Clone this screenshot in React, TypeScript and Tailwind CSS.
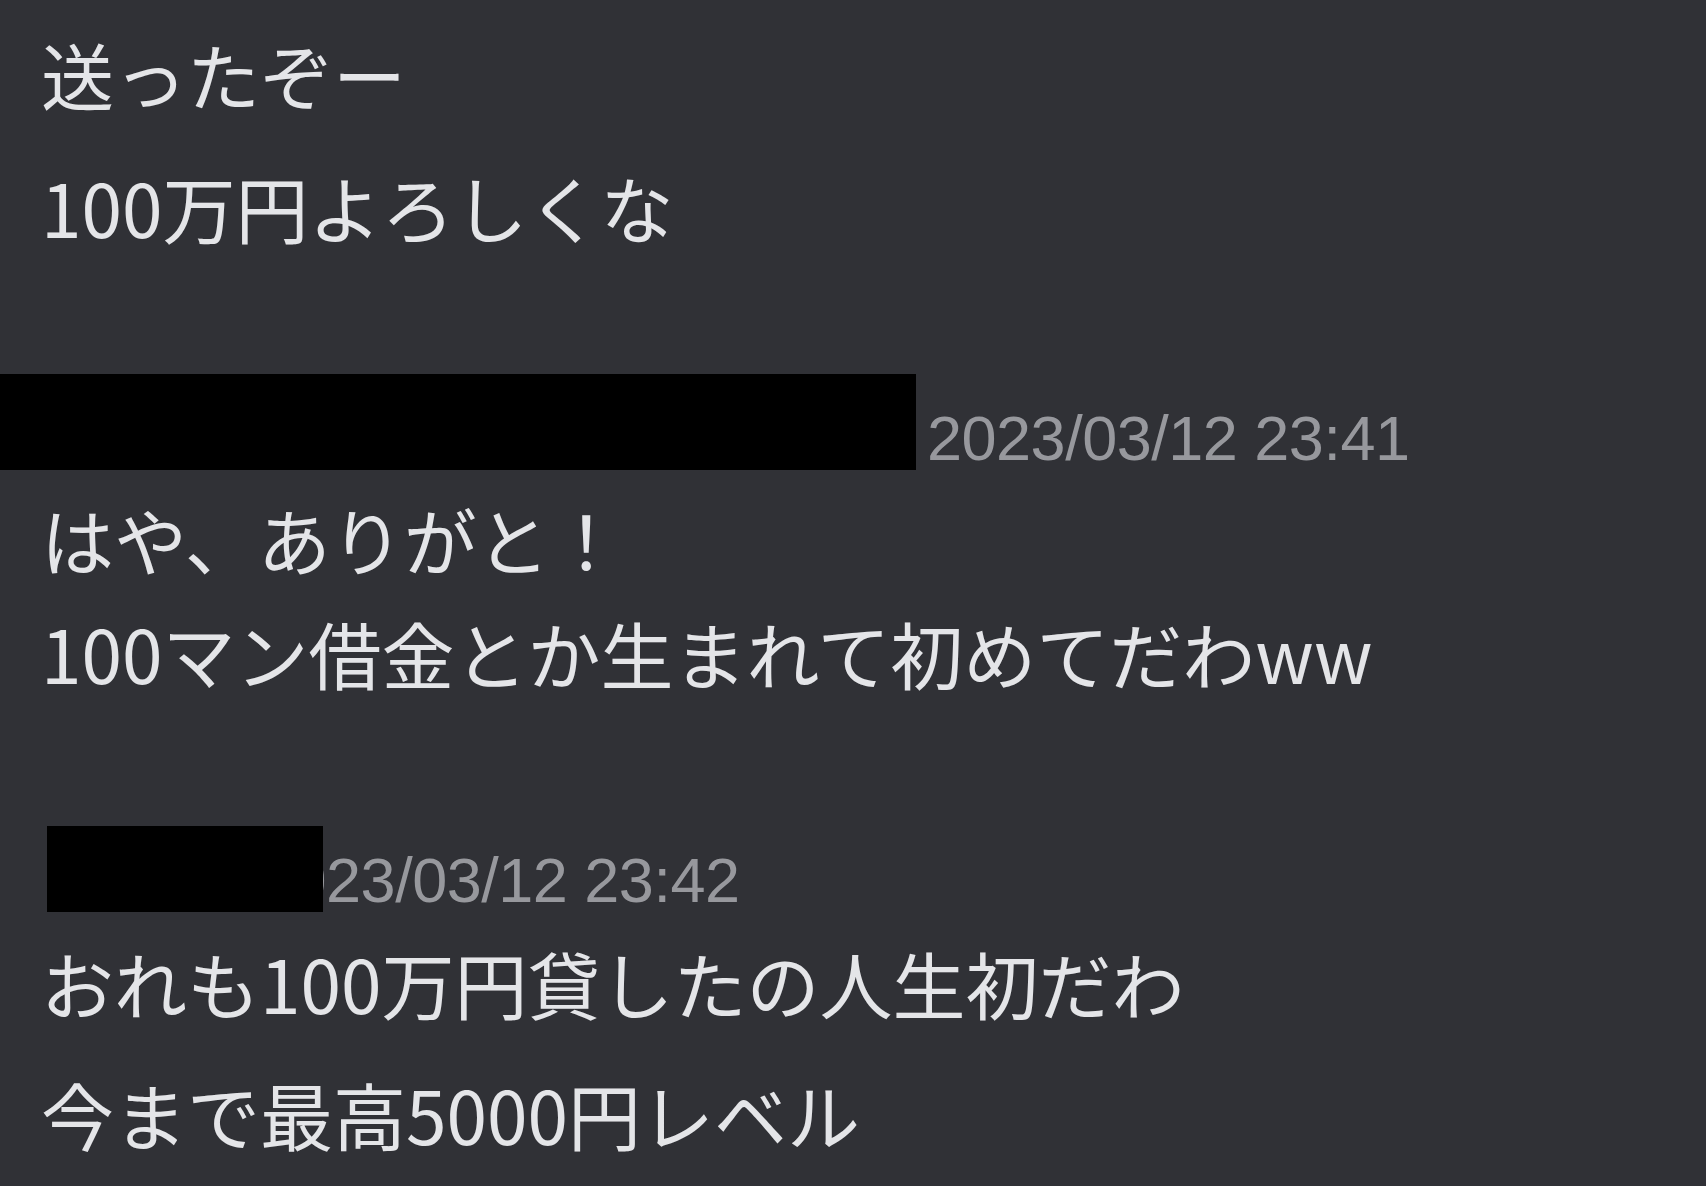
const jp = { fontFamily: '"Noto Sans CJK JP", "Noto Sans", sans-serif' };

function Line({ text, lead }: { text: string; lead: string }) {
  return (
    <div className={`pl-[41px] text-[73px] text-[#e4e5e8] whitespace-nowrap ${lead}`} style={jp}>
      {text}
    </div>
  );
}

export default function App() {
  return (
    <div className="min-h-screen w-full overflow-hidden bg-[#303136] pt-[7px]">
      {/* tail of the previous message */}
      <Line text="送ったぞー" lead="leading-[133px]" />
      <Line text="100万円よろしくな" lead="leading-[133px]" />

      {/* header 1: redacted avatar + name */}
      <div className="mt-[101px] flex items-end h-[96px]">
        <div className="h-full w-[916px] bg-black" />
        <span className="ml-[11px] text-[63px] leading-none tracking-[-0.5px] text-[#97989d] font-['Liberation_Sans',Arial,sans-serif]">
          2023/03/12 23:41
        </span>
      </div>

      <div className="mt-[11px]">
        <Line text="はや、ありがと！" lead="leading-[114px]" />
        <Line text="100マン借金とか生まれて初めてだわww" lead="leading-[114px]" />
      </div>

      {/* header 2 */}
      <div className="mt-[117px] pl-[47px] flex items-end h-[86px]">
        <div className="relative z-10 h-full w-[276px] bg-black" />
        <span className="-ml-[66px] text-[63px] leading-none tracking-[-0.5px] text-[#97989d] font-['Liberation_Sans',Arial,sans-serif]">
          2023/03/12 23:42
        </span>
      </div>

      <div className="mt-[5px]">
        <Line text="おれも100万円貸したの人生初だわ" lead="leading-[131px]" />
        <Line text="今まで最高5000円レベル" lead="leading-[131px]" />
      </div>
    </div>
  );
}
